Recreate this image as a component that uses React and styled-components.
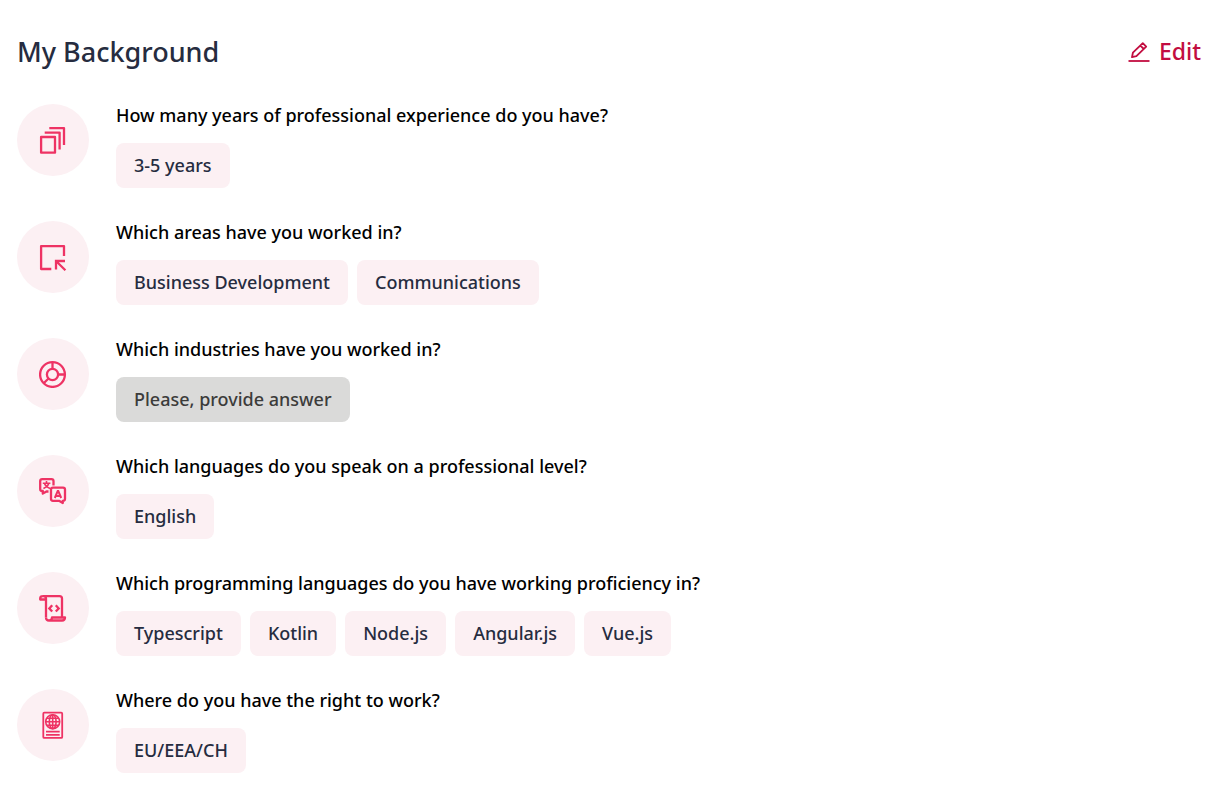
import React from "react";
import styled, { createGlobalStyle } from "styled-components";

const GlobalStyle = createGlobalStyle`
  * {
    box-sizing: border-box;
  }

  body {
    margin: 0;
    background: #ffffff;
    font-family: "Noto Sans", "Open Sans", sans-serif;
    font-weight: 500;
  }
`;

const Section = styled.section`
  padding: 32px 24px 14px 17px;
`;

const Header = styled.header`
  display: flex;
  align-items: flex-start;
  justify-content: space-between;
  margin-bottom: 32px;
`;

const Title = styled.h1`
  margin: 0;
  color: #262c40;
  font-size: 27px;
  font-weight: 500;
  line-height: 40px;
`;

const EditButton = styled.button`
  display: flex;
  align-items: center;
  gap: 9px;
  padding: 0;
  border: none;
  background: none;
  color: #c20d40;
  font-family: inherit;
  font-size: 23px;
  font-weight: 500;
  line-height: 38px;
  cursor: pointer;
`;

const List = styled.ul`
  display: flex;
  flex-direction: column;
  gap: 33px;
  margin: 0;
  padding: 0;
  list-style: none;
`;

const Item = styled.li`
  display: flex;
  gap: 27px;
`;

const IconCircle = styled.div`
  display: flex;
  flex-shrink: 0;
  align-items: center;
  justify-content: center;
  width: 72px;
  height: 72px;
  border-radius: 50%;
  background: #fcf0f3;
  color: #ee3364;
`;

const Question = styled.h2`
  margin: 0 0 16px;
  color: #000000;
  font-size: 18px;
  font-weight: 500;
  line-height: 23px;
`;

const Answers = styled.div`
  display: flex;
  flex-wrap: wrap;
  gap: 9px;
`;

const Answer = styled.span`
  padding: 0 18px;
  border-radius: 8px;
  background: ${({ $empty }) => ($empty ? "#dadad9" : "#fcf0f3")};
  color: ${({ $empty }) => ($empty ? "#3c3c3b" : "#262c40")};
  font-size: 18px;
  line-height: 45px;
`;

const Icon = ({ children }) => (
  <svg
    width="28"
    height="28"
    viewBox="0 0 28 28"
    fill="none"
    stroke="currentColor"
    strokeWidth="2.3"
    aria-hidden="true"
  >
    {children}
  </svg>
);

const PencilIcon = () => (
  <svg
    width="22"
    height="22"
    viewBox="0 0 22 22"
    fill="none"
    stroke="currentColor"
    strokeWidth="1.8"
    strokeLinejoin="round"
    aria-hidden="true"
  >
    <path d="M4 17.2 4.9 12.7 14.8 3.2 18.2 6.6 8.4 16.2ZM12.4 5.6 15.8 9" />
    <path d="M.5 21H21.5" />
  </svg>
);

const StackIcon = () => (
  <Icon>
    <g strokeLinejoin="round">
      <path d="M2.1 11H16V26.7H2.1Z" />
      <path d="M5.7 6.6H20.6V23.5" />
      <path d="M10.3 2.1H25V18.9" />
    </g>
  </Icon>
);

const AreaIcon = () => (
  <Icon>
    <path strokeLinejoin="round" d="M12.3 26H2.1V3.1H25V13" />
    <path d="M26 18H17V26.4M17 18 26.4 27.2" />
  </Icon>
);

const IndustryIcon = () => (
  <Icon>
    <circle cx="13.5" cy="14.5" r="12.4" />
    <circle cx="13.5" cy="14.5" r="5.6" />
    <path d="M13.5 2V9M19 14.5H26M9.5 18.5 4.7 23.3" />
  </Icon>
);

const LanguageIcon = () => (
  <Icon>
    <g strokeLinejoin="round">
      <path d="M9.5 14.5H7.5L3.8 16.6V14H3Q1.2 14 1.2 12V4.1Q1.2 2.1 3.2 2.1H12.5Q14.5 2.1 14.5 4.1V8.5" />
      <path d="M14 10.6H24Q26 10.6 26 12.6V21.8Q26 23.8 24 23.8H23.8V26L20 23.8H14Q12 23.8 12 21.8V12.6Q12 10.6 14 10.6Z" />
    </g>
    <path strokeWidth="1.6" d="M7.5 3.9V6M3.8 6.3H11.4M9.8 6.3Q9 9.5 4.4 11.5M5.4 6.3Q6.4 9.5 11 11.5" />
    <path strokeWidth="2" d="M15.8 21 18.7 14H19.3L22.2 21M17 18.9H21" />
  </Icon>
);

const CodeIcon = () => (
  <Icon>
    <g strokeLinejoin="round">
      <path d="M3.5 2.1H20.5Q23 2.1 23 4.5V23M7 23.5V4.5Q7 2.1 4 2.1Q1.2 2.1 1.2 4.4V5.5H7" />
      <path d="M7 23.5Q7 26.5 10 26.5H23Q26 26.5 26 23.5H13Q12.8 26.5 10 26.5" />
    </g>
    <path d="M13.2 11.2 10.3 14.4 13.2 17.6M16.8 11.2 19.7 14.4 16.8 17.6" />
  </Icon>
);

const PassportIcon = () => (
  <Icon>
    <rect x="4.3" y="1.7" width="18.9" height="25.2" rx="1" strokeWidth="1.8" />
    <g strokeWidth="1.6">
      <circle cx="13.7" cy="10.7" r="7" />
      <ellipse cx="13.7" cy="10.7" rx="3.4" ry="7" />
      <path d="M13.7 3.7V17.7M6.7 10.7H20.7M7.8 7.2H19.6M7.8 14.2H19.6" />
    </g>
    <path strokeWidth="1.6" d="M7 20.6H20.7M7 23.9H20.7" />
  </Icon>
);

const background = [
  {
    icon: StackIcon,
    question: "How many years of professional experience do you have?",
    answers: ["3-5 years"],
  },
  {
    icon: AreaIcon,
    question: "Which areas have you worked in?",
    answers: ["Business Development", "Communications"],
  },
  {
    icon: IndustryIcon,
    question: "Which industries have you worked in?",
    answers: [],
  },
  {
    icon: LanguageIcon,
    question: "Which languages do you speak on a professional level?",
    answers: ["English"],
  },
  {
    icon: CodeIcon,
    question: "Which programming languages do you have working proficiency in?",
    answers: ["Typescript", "Kotlin", "Node.js", "Angular.js", "Vue.js"],
  },
  {
    icon: PassportIcon,
    question: "Where do you have the right to work?",
    answers: ["EU/EEA/CH"],
  },
];

const App = () => {
  return (
    <>
      <GlobalStyle />
      <Section>
        <Header>
          <Title>My Background</Title>
          <EditButton type="button">
            <PencilIcon />
            Edit
          </EditButton>
        </Header>
        <List>
          {background.map(({ icon: ItemIcon, question, answers }) => (
            <Item key={question}>
              <IconCircle>
                <ItemIcon />
              </IconCircle>
              <div>
                <Question>{question}</Question>
                <Answers>
                  {answers.map((answer) => (
                    <Answer key={answer}>{answer}</Answer>
                  ))}
                  {answers.length === 0 && <Answer $empty>Please, provide answer</Answer>}
                </Answers>
              </div>
            </Item>
          ))}
        </List>
      </Section>
    </>
  );
};

export default App;
